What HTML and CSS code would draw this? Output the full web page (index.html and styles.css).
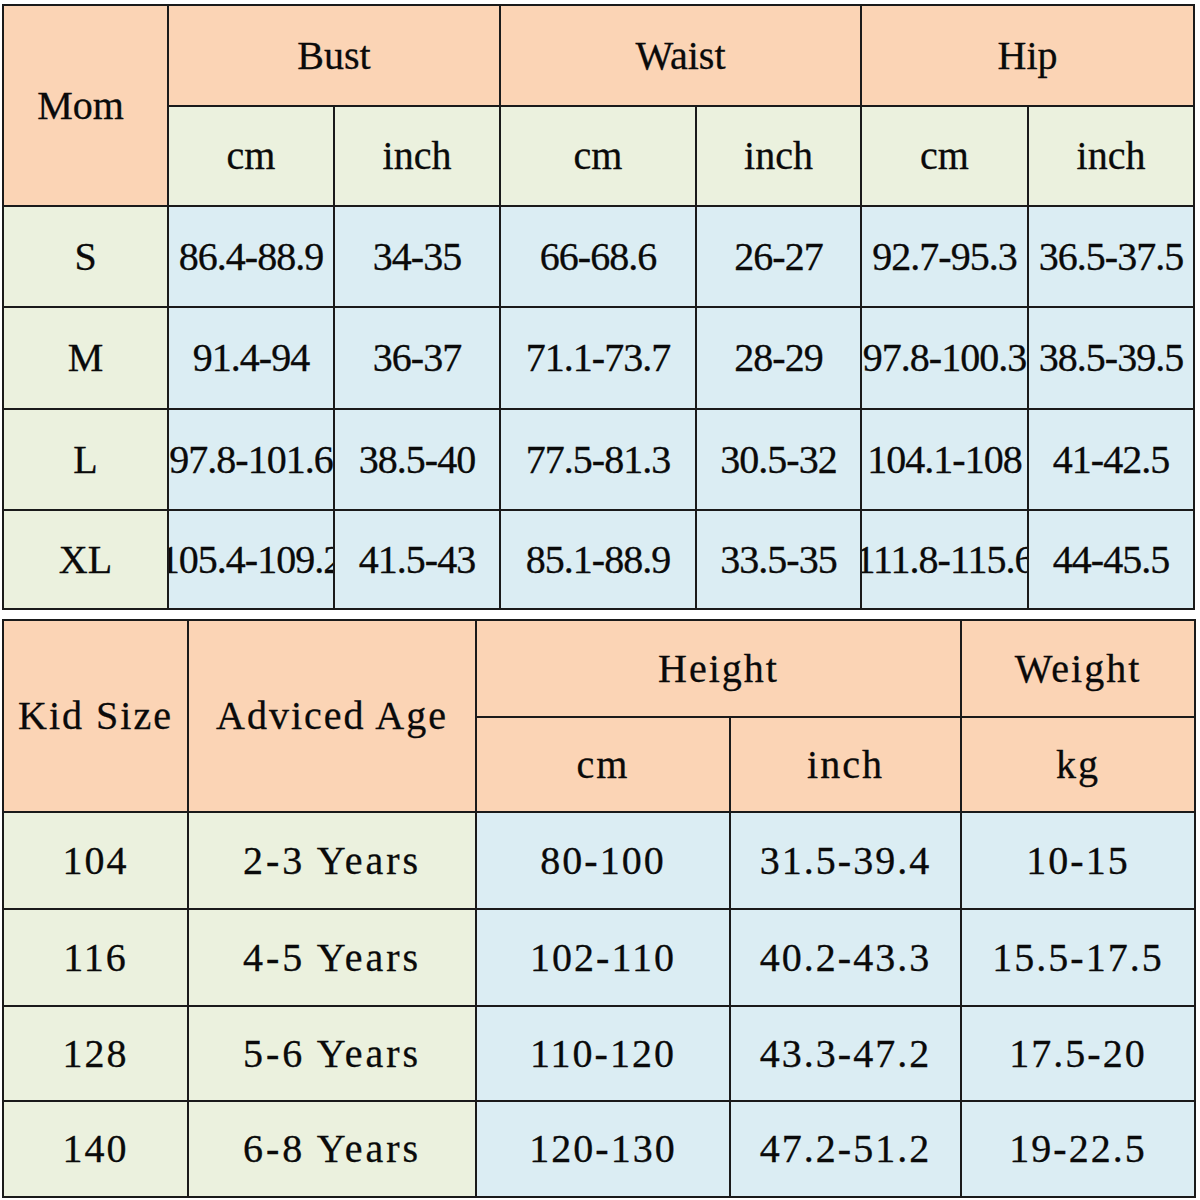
FILE: index.html
```html
<!DOCTYPE html>
<html>
<head>
<meta charset="utf-8">
<link rel="stylesheet" href="styles.css">
</head>
<body>
<div class="page">
  <div class="grid mom">
    <div class="c peach span2r shift">Mom</div>
    <div class="c peach span2c">Bust</div>
    <div class="c peach span2c">Waist</div>
    <div class="c peach span2c">Hip</div>
    <div class="c green">cm</div>
    <div class="c green">inch</div>
    <div class="c green">cm</div>
    <div class="c green">inch</div>
    <div class="c green">cm</div>
    <div class="c green">inch</div>

    <div class="c green">S</div>
    <div class="c blue num">86.4-88.9</div>
    <div class="c blue num">34-35</div>
    <div class="c blue num">66-68.6</div>
    <div class="c blue num">26-27</div>
    <div class="c blue num">92.7-95.3</div>
    <div class="c blue num">36.5-37.5</div>

    <div class="c green">M</div>
    <div class="c blue num">91.4-94</div>
    <div class="c blue num">36-37</div>
    <div class="c blue num">71.1-73.7</div>
    <div class="c blue num">28-29</div>
    <div class="c blue num">97.8-100.3</div>
    <div class="c blue num">38.5-39.5</div>

    <div class="c green">L</div>
    <div class="c blue num">97.8-101.6</div>
    <div class="c blue num">38.5-40</div>
    <div class="c blue num">77.5-81.3</div>
    <div class="c blue num">30.5-32</div>
    <div class="c blue num">104.1-108</div>
    <div class="c blue num">41-42.5</div>

    <div class="c green">XL</div>
    <div class="c blue num">105.4-109.2</div>
    <div class="c blue num">41.5-43</div>
    <div class="c blue num">85.1-88.9</div>
    <div class="c blue num">33.5-35</div>
    <div class="c blue num">111.8-115.6</div>
    <div class="c blue num">44-45.5</div>
  </div>

  <div class="grid kid">
    <div class="c peach span2r">Kid Size</div>
    <div class="c peach span2r">Adviced Age</div>
    <div class="c peach span2c">Height</div>
    <div class="c peach">Weight</div>
    <div class="c peach">cm</div>
    <div class="c peach">inch</div>
    <div class="c peach">kg</div>

    <div class="c green">104</div>
    <div class="c green wide">2-3 Years</div>
    <div class="c blue">80-100</div>
    <div class="c blue">31.5-39.4</div>
    <div class="c blue">10-15</div>

    <div class="c green">116</div>
    <div class="c green wide">4-5 Years</div>
    <div class="c blue">102-110</div>
    <div class="c blue">40.2-43.3</div>
    <div class="c blue">15.5-17.5</div>

    <div class="c green">128</div>
    <div class="c green wide">5-6 Years</div>
    <div class="c blue">110-120</div>
    <div class="c blue">43.3-47.2</div>
    <div class="c blue">17.5-20</div>

    <div class="c green">140</div>
    <div class="c green wide">6-8 Years</div>
    <div class="c blue">120-130</div>
    <div class="c blue">47.2-51.2</div>
    <div class="c blue">19-22.5</div>
  </div>
</div>
</body>
</html>
```

FILE: styles.css
```css
html, body {
  margin: 0;
  padding: 0;
  background: #ffffff;
}

.page {
  padding: 4px 0 0 2px;
  display: flex;
  flex-direction: column;
  gap: 9px;
  font-family: "Times New Roman", "Liberation Serif", Tinos, "DejaVu Serif", serif;
  color: #0a0a0a;
  -webkit-text-stroke: 0.3px #0a0a0a;
}

.grid {
  display: grid;
  gap: 2px;
  padding: 2px;
  background: #1a1a1a;
  width: max-content;
}

.mom {
  grid-template-columns: 163px 164px 164px 194px 163px 165px 164px;
  grid-template-rows: 99px 98px 99px 100px 99px 97px;
  font-size: 40px;
}

.kid {
  grid-template-columns: 183px 286px 252px 229px 232px;
  grid-template-rows: 95px 93px 95px 95px 93px 94px;
  font-size: 40px;
  letter-spacing: 2px;
}

.c {
  display: flex;
  align-items: center;
  justify-content: center;
  overflow: hidden;
  white-space: nowrap;
  line-height: 1;
}

.num {
  letter-spacing: -1px;
}

.wide {
  letter-spacing: 3px;
}

.shift {
  padding-right: 10px;
}

.span2r {
  grid-row: span 2;
}

.span2c {
  grid-column: span 2;
}

.peach {
  background: #fbd4b5;
}

.green {
  background: #ebf1de;
}

.blue {
  background: #dbedf3;
}
```
